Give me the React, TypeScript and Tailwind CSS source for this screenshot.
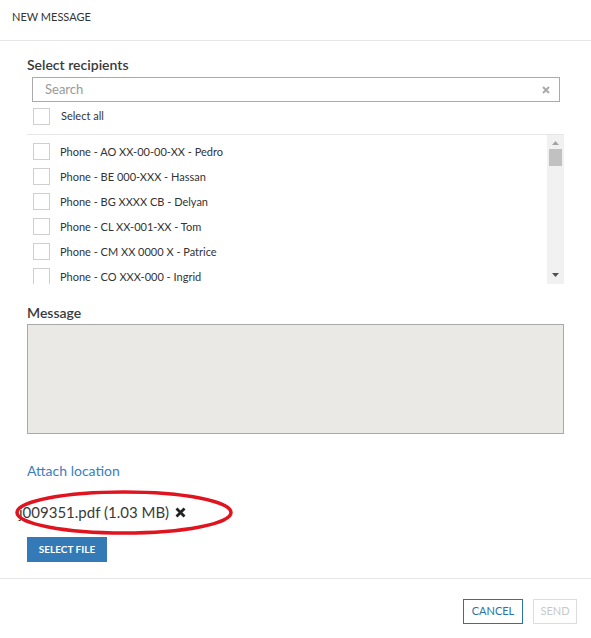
import React from "react";

const recipients = [
  "Phone - AO XX-00-00-XX - Pedro",
  "Phone - BE 000-XXX - Hassan",
  "Phone - BG XXXX CB - Delyan",
  "Phone - CL XX-001-XX - Tom",
  "Phone - CM XX 0000 X - Patrice",
  "Phone - CO XXX-000 - Ingrid",
];

function Box() {
  return <span className="block w-[17px] h-[17px] border border-[#cfcfcf] bg-white shrink-0" />;
}

export default function App() {
  return (
    <div
      className="w-[591px] h-[638px] bg-white text-[#333] overflow-hidden relative"
      style={{ fontFamily: "Lato, 'Open Sans', sans-serif" }}
    >
      {/* header */}
      <div className="h-[41px] border-b border-[#e6e6e6] px-[12px] pt-[9px] text-[11px] leading-[16px] uppercase text-[#333]">
        New Message
      </div>

      <div className="px-[27px]">
        <div className="mt-[15px] text-[14px] leading-[18px] font-semibold text-[#3a3a3a]">Select recipients</div>

        {/* search */}
        <div className="ml-[5px] mt-[3px] w-[528px] h-[25px] border border-[#aaa] flex items-center pl-[12px] pr-[9px]">
          <span className="flex-1 text-[13px] text-[#999]">Search</span>
          <svg width="8" height="8" viewBox="0 0 8 8">
            <path d="M1 1L7 7M7 1L1 7" stroke="#aaa" strokeWidth="2" />
          </svg>
        </div>

        <div className="ml-[6px] mt-[6px] h-[17px] flex items-center gap-[11px] text-[11px]">
          <Box />
          <span>Select all</span>
        </div>

        {/* recipients list */}
        <div className="mt-[9px] h-[150px] border-t border-[#e6e6e6] flex overflow-hidden">
          <div className="flex-1 pt-[8px] overflow-hidden">
            {recipients.map((r) => (
              <div key={r} className="h-[25px] flex items-start gap-[10px] pl-[6px] text-[11px] leading-[17px]">
                <Box />
                <span>{r}</span>
              </div>
            ))}
          </div>
          <div className="w-[17px] bg-[#f1f1f1] flex flex-col items-center">
            <svg width="7" height="4" viewBox="0 0 7 4" className="mt-[6px]">
              <path d="M0 4L3.5 0L7 4Z" fill="#a3a3a3" />
            </svg>
            <div className="mt-[4px] w-[13px] h-[17px] bg-[#c1c1c1]" />
            <div className="flex-1" />
            <svg width="7" height="4" viewBox="0 0 7 4" className="mb-[7px]">
              <path d="M0 0L7 0L3.5 4Z" fill="#505050" />
            </svg>
          </div>
        </div>

        <div className="mt-[20px] text-[14px] leading-[18px] font-semibold text-[#3a3a3a]">Message</div>
        <div className="mt-[2px] h-[110px] bg-[#ebe9e5] border border-[#a9a9a9]" />

        <div className="mt-[28px] text-[14px] leading-[18px] text-[#3b7dbd]">Attach location</div>

        <div className="mt-[23px] -ml-[8px] flex items-center gap-[6px] text-[15px] leading-[18px] text-[#3a3a3a]">
          <span>j009351.pdf (1.03 MB)</span>
          <svg width="11" height="11" viewBox="0 0 11 11">
            <path d="M1.5 1.5L9.5 9.5M9.5 1.5L1.5 9.5" stroke="#222" strokeWidth="2.8" />
          </svg>
        </div>

        <button className="mt-[16px] h-[25px] w-[80px] bg-[#337ab7] text-white text-[10px] font-bold uppercase">
          Select file
        </button>
      </div>

      {/* footer */}
      <div className="mt-[16px] border-t border-[#e6e6e6] flex justify-end gap-[10px] pr-[14px] pt-[20px]">
        <button className="h-[25px] w-[60px] border border-[#2b73a3] text-[#2b73a3] text-[11px] uppercase">
          Cancel
        </button>
        <button className="h-[25px] w-[44px] border border-[#ddd] text-[#c8c8c8] text-[11px] uppercase">
          Send
        </button>
      </div>

      {/* red ring drawn around the attached file */}
      <svg className="absolute left-[14px] top-[490px] pointer-events-none" width="222" height="45" viewBox="0 0 222 45">
        <ellipse cx="110" cy="22.5" rx="107" ry="20.5" fill="none" stroke="#e0141f" strokeWidth="3.5" />
      </svg>
    </div>
  );
}
